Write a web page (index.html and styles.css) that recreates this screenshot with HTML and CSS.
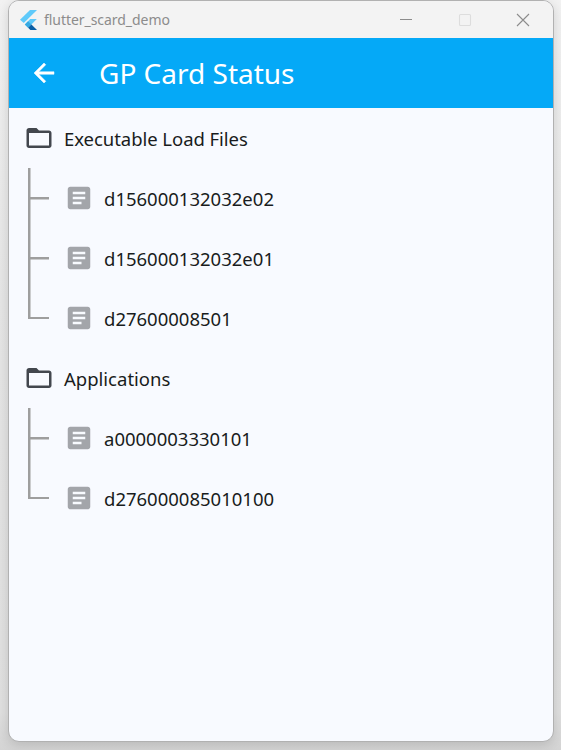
FILE: index.html
```html
<!DOCTYPE html>
<html lang="en">
<head>
<meta charset="utf-8">
<title>flutter_scard_demo</title>
<link rel="stylesheet" href="styles.css">
</head>
<body>
<svg class="symbols" aria-hidden="true">
  <symbol id="folder" viewBox="0 0 24 24"><path d="M9.17 6l2 2H20v10H4V6h5.17M10 4H4c-1.1 0-1.99.9-1.99 2L2 18c0 1.1.9 2 2 2h16c1.1 0 2-.9 2-2V8c0-1.1-.9-2-2-2h-8l-2-2z"/><path d="M3 5h7l2 3H3z"/></symbol>
  <symbol id="article" viewBox="0 0 24 24"><path d="M19 3H5c-1.1 0-2 .9-2 2v14c0 1.1.9 2 2 2h14c1.1 0 2-.9 2-2V5c0-1.1-.9-2-2-2zm-5 14H7v-2h7v2zm3-4H7v-2h10v2zm0-4H7V7h10v2z"/></symbol>
</svg>
<main class="window">
  <header class="titlebar">
    <svg class="logo" viewBox="0 0 17 20" preserveAspectRatio="none"><path fill="#5fcafa" d="M10 0h7L3.8 13 0 9.8z"/><path fill="#5fcafa" d="M10.2 9h6.6l-5.4 5.5-3.2 3.2-3.4-3.2z"/><path fill="#35a9e2" d="M4.8 14.5l3.3-3.2 3.3 3.2-3.3 3.2z"/><path fill="#0b5fa5" d="M8.1 17.7l3.3-3.2L17 20h-6.6z"/></svg>
    <span class="app-name">flutter_scard_demo</span>
    <div class="controls">
      <svg viewBox="0 0 14 14"><path d="M1 6.5h12"/></svg>
      <svg class="disabled" viewBox="0 0 14 14"><rect x="1.5" y="1.5" width="11" height="11" rx="1"/></svg>
      <svg viewBox="0 0 14 14"><path d="M1 1l12 12M13 1L1 13"/></svg>
    </div>
  </header>
  <div class="appbar">
    <svg class="back" viewBox="0 0 24 24"><path d="M20 11H7.83l5.59-5.59L12 4l-8 8 8 8 1.41-1.41L7.83 13H20v-2z"/></svg>
    <h1>GP Card Status</h1>
  </div>
  <section class="tree">
    <div class="row folder"><svg><use href="#folder"/></svg><span class="label">Executable Load Files</span></div>
    <div class="row leaf"><i class="branch"></i><svg><use href="#article"/></svg><span>d156000132032e02</span></div>
    <div class="row leaf"><i class="branch"></i><svg><use href="#article"/></svg><span>d156000132032e01</span></div>
    <div class="row leaf"><i class="branch last"></i><svg><use href="#article"/></svg><span>d27600008501</span></div>
    <div class="row folder"><svg><use href="#folder"/></svg><span>Applications</span></div>
    <div class="row leaf"><i class="branch"></i><svg><use href="#article"/></svg><span>a0000003330101</span></div>
    <div class="row leaf"><i class="branch last"></i><svg><use href="#article"/></svg><span>d276000085010100</span></div>
  </section>
</main>
</body>
</html>
```
FILE: styles.css
```css
* { box-sizing: border-box; }
body {
  margin: 0;
  height: 750px;
  padding: 0 7px 8px 8px;
  overflow: hidden;
  background: linear-gradient(#f2f2f2, #e6e6e6 40%, #e0e0e0 95%, #d4d4d4);
  font-family: "Noto Sans", "Open Sans", sans-serif;
}
.symbols { display: none; }
.window {
  height: 742px;
  border: 1px solid #b1b1b1;
  border-radius: 11px;
  overflow: hidden;
  background: #f8faff;
  box-shadow: 0 3px 12px rgba(0, 0, 0, .14);
}
.titlebar {
  height: 37px;
  display: flex;
  align-items: center;
  padding-left: 11px;
  background: #f3f3f3;
  color: #8c8c8c;
}
.logo { width: 17px; height: 20px; margin-right: 7px; }
.app-name { font-size: 14px; letter-spacing: -.05px; }
.controls { display: flex; gap: 44.5px; margin: 0 23px 0 auto; }
.controls svg { width: 14px; height: 14px; fill: none; stroke: #8c8c8c; stroke-width: 1.1; }
.controls .disabled { stroke: #dddddd; }
.appbar {
  height: 70px;
  display: flex;
  align-items: center;
  padding-left: 20px;
  background: #05a9f7;
  color: #fff;
}
.back { width: 30px; height: 30px; fill: #fff; stroke: #fff; stroke-width: .4; }
h1 { margin: 0 0 0 40px; font-size: 28px; font-weight: 400; }
.row {
  height: 60px;
  display: flex;
  align-items: center;
  color: #191c20;
  font-size: 18.5px;
  white-space: nowrap;
}
.row svg { width: 30px; height: 30px; flex: none; }
.folder { padding-left: 15px; }
.folder svg { fill: #43474e; margin-right: 10px; }
.label { letter-spacing: -.05px; }
.leaf { padding-left: 19px; }
.leaf svg { fill: #a3a5aa; margin: 0 10px 0 15px; }
.branch {
  width: 21px;
  height: 60px;
  background:
    linear-gradient(#9e9e9e, #9e9e9e) 0 0 / 2.5px 100% no-repeat,
    linear-gradient(#9e9e9e, #9e9e9e) 0 28.75px / 100% 2.5px no-repeat;
}
.branch.last { height: 31.25px; align-self: flex-start; }
```
